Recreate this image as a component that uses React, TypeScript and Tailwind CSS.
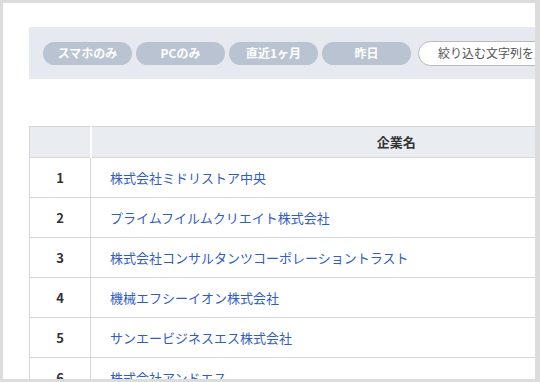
const filters = ['スマホのみ', 'PCのみ', '直近1ヶ月', '昨日'];

const companies = [
  '株式会社ミドリストア中央',
  'プライムフイルムクリエイト株式会社',
  '株式会社コンサルタンツコーポレーショントラスト',
  '機械エフシーイオン株式会社',
  'サンエービジネスエス株式会社',
  '株式会社アンドエス',
];

export default function App() {
  return (
    <div
      className="w-[540px] h-[382px] bg-[#dcdcdc] pt-[3px] pb-[3px] pl-[3px] pr-[5px]"
      style={{ fontFamily: '"Noto Sans CJK JP", "Noto Sans", sans-serif' }}
    >
      <div className="h-full bg-white overflow-hidden pl-[26px] pt-[24px]">
        {/* Filter bar */}
        <div className="h-[52px] bg-[#e6e9ef] flex items-center pl-[14px] gap-[4px] overflow-hidden">
          {filters.map((f) => (
            <button
              key={f}
              className="w-[89px] h-[23px] shrink-0 rounded-full bg-[#bac3d1] text-white text-[12px] font-bold flex items-center justify-center"
            >
              {f}
            </button>
          ))}
          <div className="ml-[3px] w-[200px] h-[25px] shrink-0 rounded-full bg-white border border-[#b9b9b9] flex items-center pl-[19px] text-[12px] text-[#555] whitespace-nowrap overflow-hidden">
            絞り込む文字列を入力してください
          </div>
        </div>

        {/* Table */}
        <table className="mt-[47px] w-[673px] border-collapse border border-[#d6d6d6] text-[13px]">
          <thead>
            <tr className="h-[31px] bg-[#e9ecf0]">
              <th className="w-[61px] border-r-2 border-white"></th>
              <th className="font-bold text-[#333] text-center">企業名</th>
            </tr>
          </thead>
          <tbody>
            {companies.map((c, i) => (
              <tr key={c} className="h-[40px] border-t border-[#d6d6d6]">
                <td className="text-center font-bold text-[#333] border-r border-[#d6d6d6]">{i + 1}</td>
                <td className="pl-[19px] text-[#2f5cc7]">{c}</td>
              </tr>
            ))}
          </tbody>
        </table>
      </div>
    </div>
  );
}
